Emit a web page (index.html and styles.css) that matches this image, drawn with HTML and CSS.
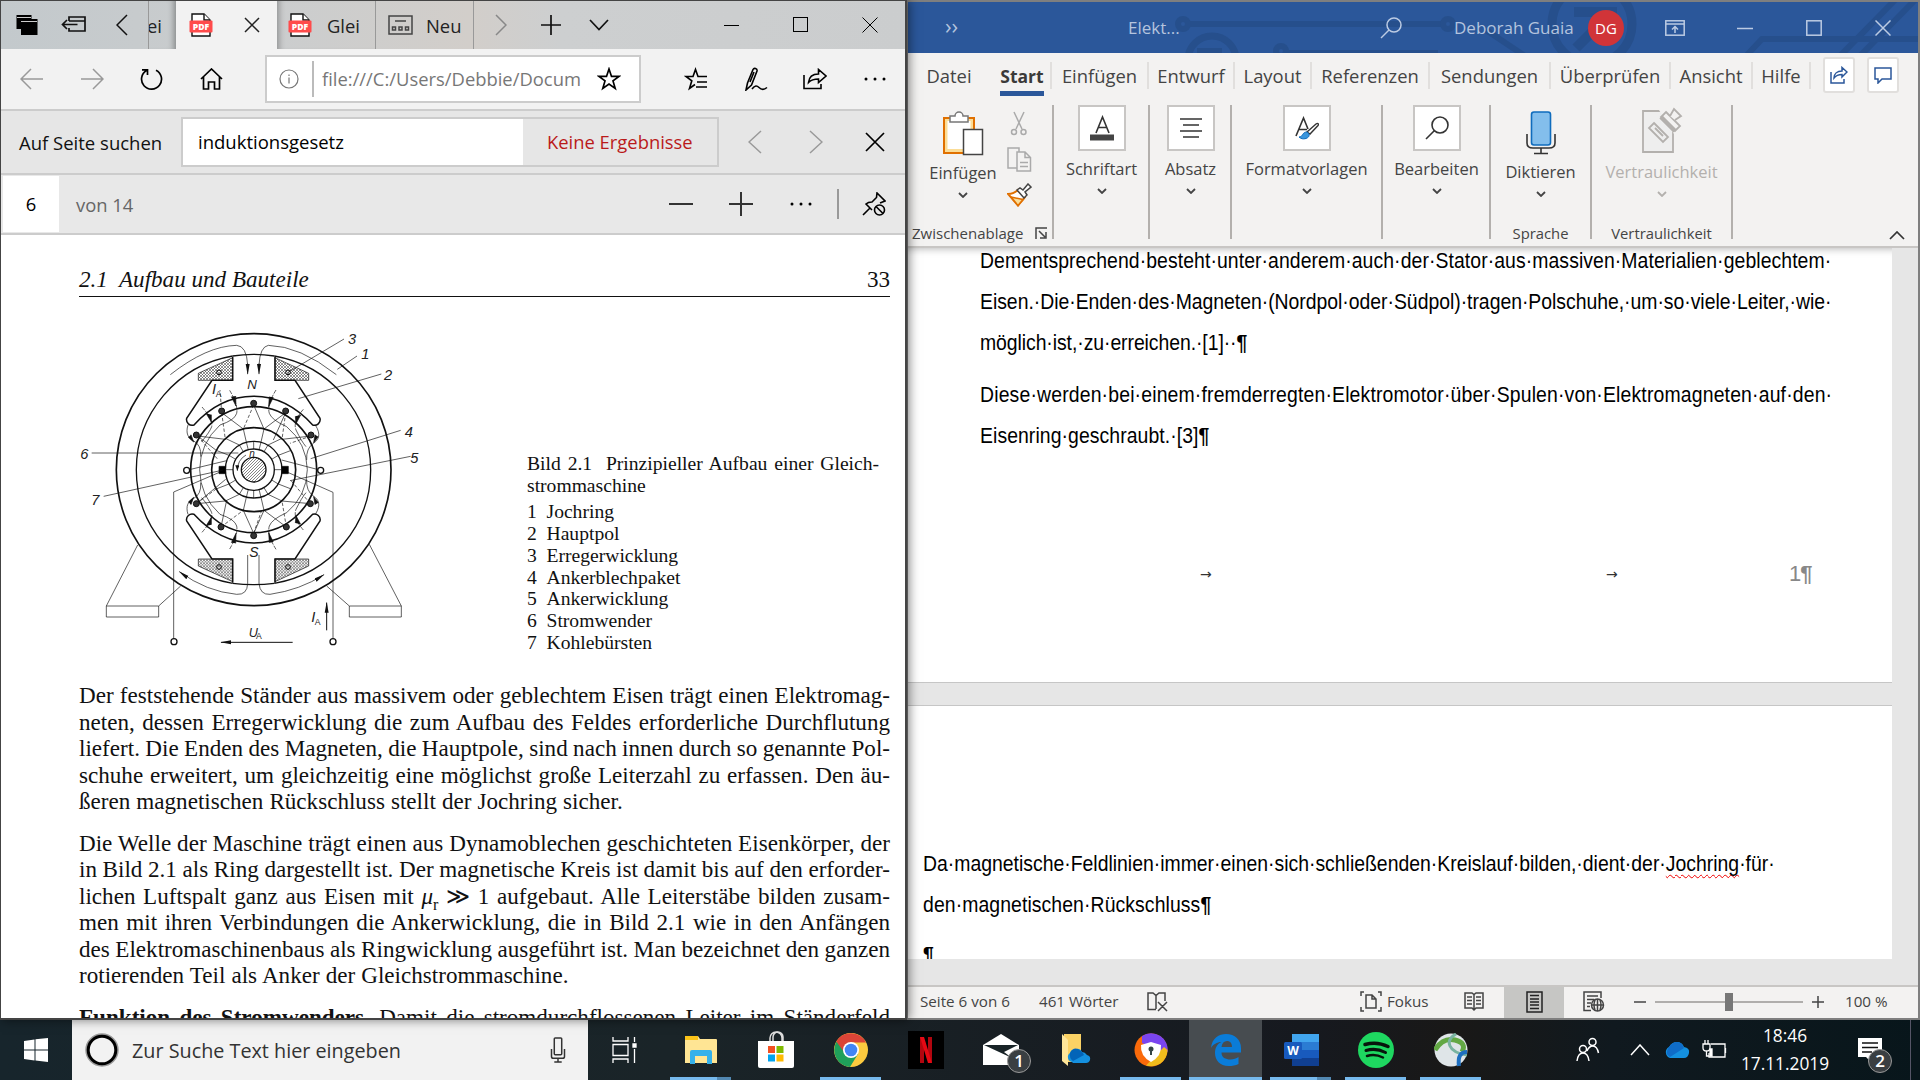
FILE: index.html
```html
<!DOCTYPE html>
<html lang="de">
<head>
<meta charset="utf-8">
<title>Desktop</title>
<link rel="stylesheet" href="styles.css">
</head>
<body>
<svg class="defs" width="0" height="0" aria-hidden="true">
  <defs>
    <symbol id="pdf" viewBox="0 0 24 25">
      <path d="M3 1h12l6 6v16H3z" fill="#fff" stroke="#111" stroke-width="1.4"/>
      <path d="M15 1v6h6" fill="#fff" stroke="#111" stroke-width="1.4"/>
      <rect x="0.5" y="7.5" width="23" height="12" rx="1" fill="#ff4b4b"/>
      <text x="12" y="16.8" text-anchor="middle" font-family="Open Sans" font-weight="800" font-size="8.6" fill="#fff">PDF</text>
    </symbol>
    <symbol id="down" viewBox="0 0 10 6"><path d="M1 1l4 4 4-4" fill="none" stroke="currentColor" stroke-width="1.8"/></symbol>
    <pattern id="hatch" width="9" height="9" patternUnits="userSpaceOnUse"><path d="M0 0l9 9M9 0L0 9" stroke="#333" stroke-width="1.6"/></pattern>
    <pattern id="lines" width="9" height="9" patternUnits="userSpaceOnUse"><path d="M0 9L9 0M-2 2L2 -2M7 11L11 7" stroke="#333" stroke-width="1.8"/></pattern>
    <marker id="arr" markerUnits="userSpaceOnUse" markerWidth="34" markerHeight="14" refX="30" refY="7" orient="auto"><path d="M0 1L32 7 0 13z" fill="#111"/></marker>
    <marker id="sarr" markerUnits="userSpaceOnUse" markerWidth="18" markerHeight="12" refX="16" refY="6" orient="auto"><path d="M0 0L17 6 0 12z" fill="#111"/></marker>
  </defs>
</svg>

<div class="windows">
  <section class="edge">
    <header class="tabs">
      <div class="tabs-left">
        <svg width="24" height="24" viewBox="0 0 24 24"><path d="M1.500 2h15v4h4v0h2v16H6V16H1.500z" fill="#000"/><path d="M2 4.500h14M6 8.500h16" stroke="#ccc" stroke-width="1"/></svg>
        <svg width="26" height="20" viewBox="0 0 26 20" fill="none" stroke="#111" stroke-width="1.700"><path d="M8 6V2h16v14H8v-3M8 6h16M1.500 9.500h15M6 5L1.500 9.500 6 14"/></svg>
        <svg width="12" height="22" viewBox="0 0 12 22" fill="none" stroke="#111" stroke-width="1.500"><path d="M11 1L1 11l10 10"/></svg>
      </div>
      <div class="tab tab-cut"><span>ei</span></div>
      <div class="tab tab-active"><svg width="24" height="25"><use href="#pdf"/></svg><svg width="16" height="16" viewBox="0 0 16 16" stroke="#222" stroke-width="1.500"><path d="M1 1l14 14M15 1L1 15"/></svg></div>
      <div class="tab tab-pdf"><svg width="24" height="25"><use href="#pdf"/></svg><span>Glei</span></div>
      <div class="tab tab-new"><svg width="25" height="20" viewBox="0 0 25 20" fill="none" stroke="#444" stroke-width="1.500"><rect x="1" y="1" width="23" height="18"/><path d="M7 6h11"/><rect x="4.500" y="12" width="3" height="3"/><rect x="11" y="12" width="3" height="3"/><rect x="17.500" y="12" width="3" height="3"/></svg><span>Neu</span></div>
      <div class="tabs-right">
        <svg width="12" height="22" viewBox="0 0 12 22" fill="none" stroke="#888" stroke-width="1.500"><path d="M1 1l10 10L1 21"/></svg>
        <svg width="20" height="20" viewBox="0 0 20 20" stroke="#111" stroke-width="1.700"><path d="M10 0v20M0 10h20"/></svg>
        <svg width="20" height="12" viewBox="0 0 20 12" fill="none" stroke="#111" stroke-width="1.700"><path d="M1 1l9 9.500L19 1"/></svg>
        <svg width="15" height="16" viewBox="0 0 15 16" stroke="#000" stroke-width="1"><path d="M0 8.500h15"/></svg>
        <svg width="16" height="16" viewBox="0 0 16 16" fill="none" stroke="#000"><rect x=".5" y=".5" width="14" height="14"/></svg>
        <svg width="16" height="16" viewBox="0 0 16 16" stroke="#000"><path d="M.5.500l15 15M15.500.500l-15 15"/></svg>
      </div>
    </header>

    <div class="nav">
      <svg width="24" height="22" viewBox="0 0 24 22" fill="none" stroke="#999" stroke-width="1.500"><path d="M23 11H1M11 1L1 11l10 10"/></svg>
      <svg width="24" height="22" viewBox="0 0 24 22" fill="none" stroke="#999" stroke-width="1.500"><path d="M1 11h22M13 1l10 10-10 10"/></svg>
      <svg width="23" height="22" viewBox="0 0 23 22" fill="none" stroke="#000" stroke-width="1.700"><path d="M6.500 2.500A10 10 0 1 0 16 2.200M2 1.800h5.500V7"/></svg>
      <svg width="23" height="22" viewBox="0 0 23 22" fill="none" stroke="#000" stroke-width="1.700"><path d="M1 11L11.500 1 22 11M3.500 9v12h5v-7h6v7h5V9"/></svg>
      <div class="address">
        <svg width="20" height="20" viewBox="0 0 20 20" fill="none" stroke="#777" stroke-width="1.200"><circle cx="10" cy="10" r="9"/><path d="M10 8.500v6M10 5.500v1.500"/></svg>
        <i class="bar"></i><span class="url">file:///C:/Users/Debbie/Documents</span>
        <svg width="24" height="24" viewBox="0 0 24 24" fill="none" stroke="#000" stroke-width="1.700"><path d="M12 2l2.500 7.400H22l-6 4.500 2.200 7.500L12 17l-6.200 4.400L8 13.900 2 9.400h7.500z"/></svg>
      </div>
      <svg width="24" height="24" viewBox="0 0 24 24" fill="none" stroke="#000" stroke-width="1.600"><path d="M23 9.500H14L11.500 2.500 9 9.500H2l5.800 4.300L5.500 21.500l5.500-4M13 15h10M12 20h11"/></svg>
      <svg width="24" height="24" viewBox="0 0 24 24" fill="none" stroke="#000" stroke-width="1.600"><path d="M2 23l1.500-7L9 2.500c1-2 4.500-1 4 1.500L7.500 18zM10 5l-4 10M8 22c3-4 5-3.500 7-1.500s5 2.500 8 0"/></svg>
      <svg width="24" height="22" viewBox="0 0 24 22" fill="none" stroke="#000" stroke-width="1.600"><path d="M1 7v13.500h17V16M5.500 14.500C6 9 9.500 6 15.500 6V1.500L23 8l-7.500 6.500V11c-4 0-7 .5-10 3.500z"/></svg>
      <svg width="24" height="6" viewBox="0 0 24 6"><circle cx="3" cy="3" r="1.500"/><circle cx="12" cy="3" r="1.500"/><circle cx="21" cy="3" r="1.500"/></svg>
    </div>

    <div class="find">
      <label>Auf Seite suchen</label>
      <div class="find-box"><div class="find-input">induktionsgesetz</div><div class="find-result">Keine Ergebnisse</div></div>
      <svg width="14" height="24" viewBox="0 0 14 24" fill="none" stroke="#999" stroke-width="1.500"><path d="M13 1L1 12l12 11"/></svg>
      <svg width="14" height="24" viewBox="0 0 14 24" fill="none" stroke="#999" stroke-width="1.500"><path d="M1 1l12 11L1 23"/></svg>
      <svg width="20" height="20" viewBox="0 0 20 20" stroke="#000" stroke-width="1.700"><path d="M1 1l18 18M19 1L1 19"/></svg>
    </div>

    <div class="pdfbar">
      <div class="pageno">6</div>
      <span class="of">von 14</span>
      <svg width="24" height="2"><path d="M0 1h24" stroke="#333" stroke-width="2"/></svg>
      <svg width="24" height="24" stroke="#333" stroke-width="2"><path d="M0 12h24M12 0v24"/></svg>
      <svg width="24" height="6" viewBox="0 0 24 6"><circle cx="3" cy="3" r="1.500"/><circle cx="12" cy="3" r="1.500"/><circle cx="21" cy="3" r="1.500"/></svg>
      <i class="bar"></i>
      <svg width="24" height="24" viewBox="0 0 24 24" fill="none" stroke="#000" stroke-width="1.600"><path d="M1 23l7-7M10 18L4 12c1.500-1.500 4-2 6-2l4.500-4.500L15 1l8 8-5 2"/><circle cx="17.500" cy="18" r="5"/><path d="M14 14.500l7 7"/></svg>
    </div>

    <article class="pdf">
      <div class="pdf-head"><em>2.1&nbsp; Aufbau und Bauteile</em><span>33</span></div>
      <div class="figure">
        <svg class="motor" width="380" height="350" viewBox="0 0 1140 1050" fill="none" stroke="#111" stroke-width="2">
          <ellipse cx="581" cy="479" rx="412" ry="408" stroke-width="5"/>
          <path d="M518 138A348 346 0 0 0 518 820M643 820A348 346 0 0 0 643 138" stroke-width="4"/>
          <path d="M518 138Q581 128 643 138M518 820Q581 828 643 820" stroke-width="4"/>
          <g id="pole" stroke-width="4.500">
            <path d="M518 140V211H456L380 325A17 17 0 0 0 402 345Q480 259 581 259Q680 259 758 345A17 17 0 0 0 780 325L705 211H645V140"/>
            <path d="M415 190L518 143V211H415zM645 143L746 190V211H645z" fill="url(#hatch)" stroke-width="2"/>
            <circle cx="477" cy="187" r="7" stroke-width="3"/><circle cx="684" cy="187" r="7" stroke-width="3"/>
            <g stroke-width="2">
              <path d="M426 291Q460 330 455 350M730 298Q698 335 708 360M509 241Q535 285 530 310M648 240Q620 285 628 310" stroke-dasharray="12 4"/>
              <path d="M384 345C376 370 385 385 400 392Q425 405 422 440M766 345C785 375 775 390 760 400Q738 415 740 450M455 350Q450 365 425 395M530 310Q525 330 480 345Q420 400 419 479M628 310Q635 330 680 350Q740 400 742 479M708 360Q725 395 738 410"/>
              <path d="M514 260l14 28-1-30M640 262l-14 28 2-30M438 310l16 26 0-22M722 315l-14 26-2-22M385 382l16 14-8-22M775 380l-14 18 4-24" fill="#111"/>
            </g>
          </g>
          <use href="#pole" transform="matrix(1 0 0 -1 0 958)"/>
          <circle cx="581" cy="479" r="189" stroke-width="5"/>
          <circle cx="581" cy="479" r="126" stroke-width="5"/>
          <circle cx="581" cy="479" r="85" stroke-width="4"/>
          <circle cx="581" cy="479" r="62" stroke-width="4"/>
          <circle cx="581" cy="479" r="37" fill="url(#lines)" stroke-width="4"/>
          <path d="M581 394v23M581 541v23M538 405l12 20M624 405l-12 20M538 553l12-20M624 553l-12-20M507 436l20 12M655 436l-20 12M507 522l20-12M655 522l-20-12M603 396l-6 24M559 396l6 24M603 562l-6-24M559 562l6-24M643 479h22M497 479h22"/>
          <path d="M559 396l-9-39M603 396l9-39M538 405l-42-20M624 405l42-20M507 436l-36-14M655 436l36-14M559 562l-9 39M603 562l9 39M538 553l-42 20M624 553l42 20M507 522l-36 14M655 522l36 14"/>
          <path d="M581 285L612 357M485 308L550 357M677 308L612 357M413 378L496 388M413 378L470 422M753 378L666 388M388 479L500 452M775 479L665 450M409 581L497 508M409 581L496 573M483 651L500 571M581 670L550 601M679 651L612 601M751 581L666 573M677 308L640 390M581 670L612 601"/>
          <path d="M581 285L550 357M485 308L496 388M677 308L666 388M413 378L475 450M753 378L690 400M483 651L550 601M581 670L605 601M679 651L666 573M751 581L690 508M409 581L470 536M485 308L480 240" stroke-dasharray="10 6"/>
          <path d="M497 479L341 546V985M665 479L819 547V985" />
          <g fill="#333" stroke-width="3"><circle cx="581" cy="280" r="9"/><circle cx="485" cy="303" r="9"/><circle cx="677" cy="303" r="9"/><circle cx="409" cy="375" r="9"/><circle cx="753" cy="375" r="9"/><circle cx="409" cy="581" r="9"/><circle cx="751" cy="581" r="9"/><circle cx="483" cy="651" r="9"/><circle cx="679" cy="651" r="9"/><circle cx="581" cy="677" r="9"/></g>
          <g fill="#fff" stroke-width="4"><circle cx="380" cy="481" r="9"/><circle cx="782" cy="481" r="9"/><circle cx="342" cy="995" r="9"/><circle cx="819" cy="995" r="9"/></g>
          <path d="M477 469h20v22h-20zM665 469h20v22h-20z" fill="#000"/>
          <path d="M331 194Q440 108 530 106Q560 108 563 165M829 194Q720 108 625 106Q600 110 597 165"/>
          <path d="M563 160V192" marker-end="url(#arr)"/>
          <path d="M597 160V192" marker-end="url(#arr)"/>
          <path d="M563 735V820Q562 855 530 853Q440 845 358 785" marker-end="url(#arr)"/>
          <path d="M597 735V820Q600 855 630 853Q720 840 792 794" marker-end="url(#arr)"/>
          <path d="M233 705L139 888M928 703L1024 888M362 828L296 888M800 828L868 888M139 888H296V921H139zM868 888H1024V921H868z"/>
          <path d="M852 87L684 187M891 138L832 178M964 192L715 266M1022 361L752 446M1052 439L690 512M95 429H535M131 559L490 480"/>
          <path d="M558 435Q532 450 532 482" marker-end="url(#sarr)"/>
          <path d="M698 997H483" stroke-width="3" marker-end="url(#arr)"/>
          <path d="M800 961V878" stroke-width="3" marker-end="url(#arr)"/>
          <g class="labels" fill="#222" stroke="none">
            <text x="864" y="101">3</text><text x="904" y="147">1</text><text x="972" y="210">2</text><text x="1034" y="380">4</text><text x="1051" y="458">5</text><text x="61" y="446">6</text><text x="94" y="584">7</text>
            <text x="562" y="236" font-size="40">N</text><text x="568" y="742" font-size="42">S</text><text x="456" y="252">I</text><text x="754" y="937">I</text><text x="566" y="980" font-size="38">U</text><text x="568" y="442" font-size="30">n</text>
            <g class="sub"><text x="467" y="260">A</text><text x="764" y="946">A</text><text x="588" y="986">A</text></g>
          </g>
        </svg>
        <div class="caption">
          <p class="cap1">Bild 2.1&nbsp; Prinzipieller Aufbau einer Gleich-</p><p>strommaschine</p>
          <ol><li><b>1</b>Jochring</li><li><b>2</b>Hauptpol</li><li><b>3</b>Erregerwicklung</li><li><b>4</b>Ankerblechpaket</li><li><b>5</b>Ankerwicklung</li><li><b>6</b>Stromwender</li><li><b>7</b>Kohlebürsten</li></ol>
        </div>
      </div>
      <div class="para">
        <p>Der feststehende Ständer aus massivem oder geblechtem Eisen trägt einen Elektromag-</p>
        <p>neten, dessen Erregerwicklung die zum Aufbau des Feldes erforderliche Durchflutung</p>
        <p>liefert. Die Enden des Magneten, die Hauptpole, sind nach innen durch so genannte Pol-</p>
        <p>schuhe erweitert, um gleichzeitig eine möglichst große Leiterzahl zu erfassen. Den äu-</p>
        <p class="last">ßeren magnetischen Rückschluss stellt der Jochring sicher.</p>
      </div>
      <div class="para">
        <p>Die Welle der Maschine trägt einen aus Dynamoblechen geschichteten Eisenkörper, der</p>
        <p>in Bild 2.1 als Ring dargestellt ist. Der magnetische Kreis ist damit bis auf den erforder-</p>
        <p>lichen Luftspalt ganz aus Eisen mit <em>μ</em><sub>r</sub> <span class="gg">≫</span> 1 aufgebaut. Alle Leiterstäbe bilden zusam-</p>
        <p>men mit ihren Verbindungen die Ankerwicklung, die in Bild 2.1 wie in den Anfängen</p>
        <p>des Elektromaschinenbaus als Ringwicklung ausgeführt ist. Man bezeichnet den ganzen</p>
        <p class="last">rotierenden Teil als Anker der Gleichstrommaschine.</p>
      </div>
      <div class="para">
        <p><strong>Funktion des Stromwenders.</strong> Damit die stromdurchflossenen Leiter im Ständerfeld</p>
      </div>
    </article>
  </section>

  <section class="word">
    <header class="title">
      <svg class="circuit" width="1010" height="51" viewBox="908 2 1010 51" fill="none" stroke="#264f8c" stroke-width="6">
        <circle cx="1183" cy="24" r="5"/><path d="M1188 24H1444"/><circle cx="1448" cy="24" r="5"/><circle cx="1212" cy="60" r="24" stroke-width="7"/><path d="M1197 51h25" /><circle cx="1281" cy="51" r="5"/><path d="M1288 53H1438M1486 30l42 28M1746 56l16-17h156M1840 56L1895 0M1860 56L1915 0"/><circle cx="1592" cy="24" r="40" stroke-width="9"/><path d="M1574 12h38v28M1612 12l-36 36" stroke-width="10"/>
      </svg>
      <span class="quick">››</span><span class="doc">Elekt...</span>
      <svg width="22" height="22" viewBox="0 0 22 22" fill="none" stroke="#bccbe3" stroke-width="1.500"><circle cx="14" cy="8" r="7"/><path d="M9 13l-8 8"/></svg>
      <span class="user">Deborah Guaia</span><span class="avatar">DG</span>
      <svg width="20" height="16" viewBox="0 0 20 16" fill="none" stroke="#bccbe3" stroke-width="1.500"><rect x=".8" y=".8" width="18.400" height="14.400"/><path d="M1 4h18M10 13V7M7 9.500L10 6.500l3 3"/></svg>
      <svg width="16" height="16" viewBox="0 0 16 16" stroke="#bccbe3" stroke-width="1.500"><path d="M0 8.500h16"/></svg>
      <svg width="16" height="16" viewBox="0 0 16 16" fill="none" stroke="#bccbe3" stroke-width="1.500"><rect x=".8" y=".8" width="14.400" height="14.400"/></svg>
      <svg width="16" height="16" viewBox="0 0 16 16" stroke="#bccbe3" stroke-width="1.500"><path d="M.5.500l15 15M15.500.500l-15 15"/></svg>
    </header>
    <nav class="menu">
      <span class="nosep">Datei</span><span class="on"><b>Start</b></span><span>Einfügen</span><span>Entwurf</span><span>Layout</span><span>Referenzen</span><span>Sendungen</span><span>Überprüfen</span><span>Ansicht</span><span>Hilfe</span>
      <div class="mbtn"><svg width="18" height="18" viewBox="0 0 18 18" fill="none" stroke="#2b579a" stroke-width="1.500"><path d="M1 6v11h13v-4M4 12c0-4 3-7 8-7V1.500L17 6l-5 5V8.500c-3 0-6 1-8 3.500z"/></svg></div>
      <div class="mbtn"><svg width="18" height="18" viewBox="0 0 18 18" fill="none" stroke="#2b579a" stroke-width="1.500"><path d="M1 2h16v11H8l-4 4v-4H1z"/></svg></div>
    </nav>
    <div class="ribbon">
      <div class="group clip">
        <div class="clip-main">
          <div class="paste">
            <svg width="42" height="46" viewBox="0 0 42 46"><path d="M2 7h30v35H2z" fill="#fbdd97" stroke="#e07000" stroke-width="2"/><path d="M5.500 10h23v28h-23z" fill="#fff"/><path d="M8 5h5a4 4 0 0 1 8 0h5v6H8z" fill="#fff" stroke="#777" stroke-width="1.500"/><path d="M21.500 18.500h19v25h-19z" fill="#fff" stroke="#444" stroke-width="1.500"/></svg>
            <span>Einfügen</span><svg class="dn" width="10" height="6"><use href="#down"/></svg>
          </div>
          <div class="clip-side">
            <svg width="18" height="25" viewBox="0 0 18 25" fill="none" stroke="#aaa" stroke-width="1.500"><path d="M4 1l8 17M14 1L6 18"/><circle cx="4" cy="21" r="2.500"/><circle cx="13.500" cy="21" r="2.500"/></svg>
            <svg width="25" height="25" viewBox="0 0 25 25" fill="#f3f2f1" stroke="#aaa" stroke-width="1.500"><path d="M1 1h11v20H1z"/><path d="M10 5h8l5.500 5.500V24H10zM18 5v5.500h5.500M13 15.500h8M13 19.500h8"/></svg>
            <svg width="25" height="24" viewBox="0 0 25 24" fill="#fff" stroke="#444" stroke-width="1.500"><path d="M1 11c4 0 7-1 10-4l7 7c-2 3-4 5-7 8.500z" stroke="#e07000" stroke-width="2"/><path d="M4 14l12 2.500-5 6z" fill="#fbdd97" stroke="#e07000"/><path d="M10 7l3-2 3 2 5-6 3 3-6 5 2 3-3 3z"/></svg>
          </div>
        </div>
        <footer><span>Zwischenablage</span><svg width="12" height="12" viewBox="0 0 12 12" fill="none" stroke="#444" stroke-width="1.500"><path d="M1 12V1h11M4 4l6 6M11 5v6H5"/></svg></footer>
      </div>
      <div class="group g2"><div class="box"><svg width="24" height="26" viewBox="0 0 24 26"><path d="M6 18L12.500 2 19 18M8 12.500h9" fill="none" stroke="#333" stroke-width="1.600"/><path d="M0 19.500h24v6H0z" fill="#444"/></svg></div><span>Schriftart</span><svg class="dn" width="10" height="6"><use href="#down"/></svg></div>
      <div class="group g3"><div class="box"><svg width="22" height="22" viewBox="0 0 22 22" stroke="#333" stroke-width="1.500"><path d="M0 2h22M3 8h16M0 14h22M3 20h16"/></svg></div><span>Absatz</span><svg class="dn" width="10" height="6"><use href="#down"/></svg></div>
      <div class="group g4"><div class="box"><svg width="24" height="24" viewBox="0 0 24 24" fill="none"><path d="M1 20L8.500 2 13 13M4 13.500h8" stroke="#333" stroke-width="1.600"/><path d="M12 16L21 8c2-1.500 3 0 2 1.500L15 18z" stroke="#333" stroke-width="1.400" fill="#fff"/><path d="M4 21c4 0 3-5 8-5 3 2 3 5-1 6.500-3 .8-5 .3-7-1.500z" fill="#3a96dd" stroke="#0f6cbd"/></svg></div><span>Formatvorlagen</span><svg class="dn" width="10" height="6"><use href="#down"/></svg></div>
      <div class="group g5"><div class="box"><svg width="24" height="24" viewBox="0 0 24 24" fill="none" stroke="#333" stroke-width="1.600"><circle cx="15" cy="9" r="8"/><path d="M9.500 14.500L1 23"/></svg></div><span>Bearbeiten</span><svg class="dn" width="10" height="6"><use href="#down"/></svg></div>
      <div class="group g6"><svg width="30" height="44" viewBox="0 0 30 44" fill="none"><rect x="5.500" y="1" width="19" height="33" rx="2.500" fill="#83beec" stroke="#0f6cbd" stroke-width="1.600"/><path d="M1 23v9q0 5 6 5h16q6 0 6-5v-9M15 37v5M8 42.500h14" stroke="#333" stroke-width="1.600"/></svg><span>Diktieren</span><svg class="dn" width="10" height="6"><use href="#down"/></svg><small>Sprache</small></div>
      <div class="group g7"><svg width="42" height="48" viewBox="0 0 42 48" fill="#eee" stroke="#b3b0ad" stroke-width="1.800"><path d="M2 4h30v41H2z"/><path d="M18 3l16-3 8 14-9 13z" fill="#f3f2f1" stroke="none"/><path d="M13 16l14 14-5 5L8 21zM14 21l8 8"/><path d="M25 5l14 14-5 5-14-14z" fill="#f3f2f1"/><path d="M29 9l4-7 7 7-6 4" fill="#f3f2f1"/><path d="M20 10l14 14" stroke-width="4.500"/></svg><span class="off">Vertraulichkeit</span><svg class="dn off" width="10" height="6"><use href="#down"/></svg><small>Vertraulichkeit</small></div>
      <svg class="collapse" width="16" height="9" viewBox="0 0 16 9" fill="none" stroke="#333" stroke-width="1.700"><path d="M1 8l7-7 7 7"/></svg>
    </div>
    <div class="canvas">
      <div class="sheet sheet1">
        <div class="narrow">
          <p class="l1">Dementsprechend·besteht·unter·anderem·auch·der·Stator·aus·massiven·Materialien·geblechtem·</p>
          <p class="l2">Eisen.·Die·Enden·des·Magneten·(Nordpol·oder·Südpol)·tragen·Polschuhe,·um·so·viele·Leiter,·wie·</p>
          <p class="l3">möglich·ist,·zu·erreichen.·[1]··<b>¶</b></p>
          <p class="l4">Diese·werden·bei·einem·fremderregten·Elektromotor·über·Spulen·von·Elektromagneten·auf·den·</p>
          <p class="l5">Eisenring·geschraubt.·[3]<b>¶</b></p>
        </div>
        <div class="foot"><span>→</span><span>→</span><span class="pn">1<b>¶</b></span></div>
      </div>
      <div class="sheet sheet2">
        <div class="narrow">
          <p class="l6">Da·magnetische·Feldlinien·immer·einen·sich·schließenden·Kreislauf·bilden,·dient·der·<u>Jochring</u>·für·</p>
          <p class="l7">den·magnetischen·Rückschluss<b>¶</b></p>
          <p class="l8"><b>¶</b></p>
        </div>
      </div>
    </div>
    <footer class="status">
      <span>Seite 6 von 6</span><span>461 Wörter</span>
      <svg width="22" height="20" viewBox="0 0 22 20" fill="none" stroke="#444" stroke-width="1.500"><path d="M9 17.500H1V1h5l3 2.500L12 1h6v8M9 3.500V17M11 10l9 9M20 10l-9 9"/></svg>
      <svg width="22" height="21" viewBox="0 0 22 21" fill="none" stroke="#444" stroke-width="1.500"><path d="M4 1H1v4M18 1h3v4M4 20H1v-4M18 20h3v-4M6 4h6l4 4v9H6zM12 4v4h4"/></svg>
      <span>Fokus</span>
      <svg width="20" height="20" viewBox="0 0 20 20" fill="none" stroke="#444" stroke-width="1.500"><path d="M1 1h7l2 1.500L12 1h7v15h-7l-2 2-2-2H1zM10 2v16M3 5h5M3 8.500h5M3 12h5M12 5h5M12 8.500h5M12 12h5"/></svg>
      <div class="view"><svg width="17" height="22" viewBox="0 0 17 22" fill="none" stroke="#222" stroke-width="1.500"><path d="M1 1h15v20H1zM4 4.500h9M4 8h9M4 11h9M4 14h9M4 17.500h9"/></svg></div>
      <svg width="22" height="21" viewBox="0 0 22 21" fill="none" stroke="#444" stroke-width="1.500"><path d="M8 19.500H1V1h17v6M4 5h11M4 8.500h7M4 12h4M4 15.500h3"/><circle cx="14.500" cy="14" r="6"/><path d="M8.500 14h12M14.500 8v12M12 9q-2 5 0 10M17 9q2 5 0 10"/></svg>
      <svg width="12" height="12" stroke="#444" stroke-width="1.500"><path d="M0 6h12"/></svg>
      <div class="slider"><i></i></div>
      <svg width="12" height="12" stroke="#444" stroke-width="1.500"><path d="M0 6h12M6 0v12"/></svg>
      <span class="zoomv">100 %</span>
    </footer>
  </section>
</div>

<footer class="taskbar">
  <div class="start"><svg width="24" height="24" viewBox="0 0 24 24" fill="#fff"><path d="M0 3l10.500-1.500v10H0zM11.500 1.300L24 0v11.500H11.500zM0 12.500h10.500v10L0 21zM11.500 12.500H24V24l-12.500-1.500z"/></svg></div>
  <div class="search">
    <svg width="34" height="36" viewBox="0 0 34 36"><circle cx="17" cy="18" r="15.500" fill="none" stroke="#999" stroke-width="2.500"/><circle cx="17" cy="18" r="13.800" fill="none" stroke="#000" stroke-width="3"/></svg>
    <span>Zur Suche Text hier eingeben</span>
    <svg width="18" height="26" viewBox="0 0 18 28" fill="none" stroke="#333" stroke-width="1.600"><rect x="5" y="1" width="8" height="18" rx="1"/><path d="M2 13v8q0 2 2 2h10q2 0 2-2v-8M9 23v4M5 27h8"/></svg>
  </div>
  <div class="app a1"><svg width="26" height="26" viewBox="0 0 26 26" fill="none" stroke="#fff" stroke-width="1.300"><path d="M1 0v4h15V0M1 7.500h15v11H1zM1 26v-4h15v4M22.500 0v5M22.500 12v14"/><path d="M21 7h3v3h-3z" fill="#fff"/></svg></div>
  <div class="app split"><svg width="34" height="30" viewBox="0 0 34 30"><path d="M1 2q0-1 1-1h12l2 3h16q1 0 1 1v23H1z" fill="#ffe594"/><path d="M1 1h13v4H1z" fill="#fcc419"/><path d="M6 29V17q0-2 2-2h18q2 0 2 2v12h-5v-8H11v8z" fill="#35b1ea"/></svg></div>
  <div class="app"><svg width="36" height="38" viewBox="0 0 36 38"><path d="M12 11V7a6 6 0 0 1 12 0v4M15 11V6a5 5 0 0 1 10 0v5" fill="none" stroke="#ddd" stroke-width="1.500"/><path d="M0 10h36v25q0 2-2 2H2q-2 0-2-2z" fill="#fff"/><path d="M10 15h7v7h-7z" fill="#f25022"/><path d="M18.500 15h7v7h-7z" fill="#7fba00"/><path d="M10 23.500h7v7h-7z" fill="#00a4ef"/><path d="M18.500 23.500h7v7h-7z" fill="#ffb900"/></svg></div>
  <div class="app run"><svg width="34" height="36" viewBox="0 0 34 36"><circle cx="17" cy="18" r="17" fill="#fcca3f"/><path d="M17 18L2.500 9.500A17 17 0 0 0 16 35l8-13z" fill="#1fa05a"/><path d="M2.300 9.500A17 17 0 0 1 32 10.500H17L10 20z" fill="#db4437"/><circle cx="17" cy="18" r="8" fill="#fff"/><circle cx="17" cy="18" r="6.300" fill="#4285f4"/></svg></div>
  <div class="app"><svg width="36" height="38" viewBox="0 0 36 38"><path d="M0 0h36v38H0z" fill="#000"/><path d="M12 6h4v26h-4zM20 6h4v26h-4z" fill="#b1060f"/><path d="M12 6h4l8 26h-4z" fill="#e50914"/></svg></div>
  <div class="app mail"><svg width="38" height="34" viewBox="0 0 38 34"><path d="M1 12L19 1l18 11v20H1z" fill="#fff"/><path d="M2 12h34L22 19l8 6z" fill="#182327"/></svg><b>1</b></div>
  <div class="app"><svg width="30" height="34" viewBox="0 0 30 34"><path d="M3 1h17v28H3z" fill="#fbd265"/><path d="M1 1l6 6v26l-6-5z" fill="#ffe69a"/><path d="M11 29a5 5 0 0 1-2-9q1-4 6-4 4-1 6 3 3 0 5 3 4 1 3 5-1 3-4 3H12z" fill="#1490df"/><path d="M9 20q3-6 8-4 4 2 6 6L12 28q-4-3-3-8z" fill="#0364b8"/></svg></div>
  <div class="app run"><svg width="34" height="34" viewBox="0 0 34 34"><circle cx="17" cy="17" r="16.500" fill="#fa6a0a"/><path d="M8 3a16.500 16.500 0 0 1 25.500 16L17 14 8 10z" fill="#7a45f0"/><path d="M33.500 17A16.500 16.500 0 0 1 12 32.500L30 14z" fill="#f0bc1c"/><path d="M17 9l10 3q1 11-10 17Q6 23 7 12z" fill="#fff"/><circle cx="17" cy="16" r="2.500" fill="#344"/><path d="M16 17h2v5h-2z" fill="#344"/></svg></div>
  <div class="app run active"><svg width="32" height="34" viewBox="0 0 32 34"><path d="M1 15C2 5 9 1 16 1c9 0 15 6 15 14v4.500H11.500c0 5 4 7 9 7 3 0 6-1 8-2.500v7c-3 1.500-6 2-10 2C10 33 5 27 5 20c0-5 2-9 6.500-11C7 9 3 11.500 1 15zm10.500-1H22c0-4-2-6-5-6s-5 2-5.500 6z" fill="#0a7cd8"/></svg></div>
  <div class="app split"><svg width="36" height="34" viewBox="0 0 36 34"><path d="M9 1h27v8H9z" fill="#41a5ee"/><path d="M9 9h27v8H9z" fill="#2b7cd3"/><path d="M9 17h27v8H9z" fill="#185abd"/><path d="M9 25h27v8H9z" fill="#103f91"/><rect x="1" y="9" width="18" height="17" rx="1.500" fill="#185abd"/><text x="10" y="22" text-anchor="middle" font-family="Open Sans" font-weight="700" font-size="12" fill="#fff">W</text></svg></div>
  <div class="app run"><svg width="36" height="36" viewBox="0 0 36 36" fill="none" stroke="#07150b" stroke-linecap="round"><circle cx="18" cy="18" r="18" fill="#1ed760" stroke="none"/><path d="M7 12.500q12-3.500 23 2" stroke-width="3.500"/><path d="M8 18.500q10-3 19.500 2" stroke-width="3"/><path d="M9 24q8-2.500 16 1.500" stroke-width="2.500"/></svg></div>
  <div class="app run"><svg width="34" height="34" viewBox="0 0 34 34" fill="none"><circle cx="17" cy="17" r="16.500" fill="#dfe5e8"/><path d="M1 17Q9 4 21 7t7 12" stroke="#63a844" stroke-width="5"/><path d="M22 1Q13 6 16 13t17 9" stroke="#79b3a0" stroke-width="3"/><path d="M33 19q-10 0-8 14" stroke="#1e6fc0" stroke-width="4"/></svg></div>
  <div class="tray">
    <svg width="24" height="26" viewBox="0 0 24 26" fill="none" stroke="#fff" stroke-width="1.500"><circle cx="16.500" cy="5" r="3.500"/><circle cx="7" cy="12" r="3.500"/><path d="M1 24q1-8 6-8t6 8M11 14q2-5 6-5t5.500 7"/></svg>
    <svg width="20" height="12" viewBox="0 0 20 12" fill="none" stroke="#fff" stroke-width="1.500"><path d="M1 11l9-10 9 10"/></svg>
    <svg width="26" height="18" viewBox="0 0 26 18"><path d="M6 17a6 6 0 0 1-1-11q3-5 8-5t7 5q6 1 5 6-1 5-5 5z" fill="#1490df"/><path d="M5 6q3-5 8-5t7 6L6 16q-6-3-1-10z" fill="#0f6cc8"/></svg>
    <svg width="26" height="20" viewBox="0 0 26 20" fill="none" stroke="#fff" stroke-width="1.300"><path d="M10 4h14v13H8v-4M24.500 8v5M2 4h7v4q0 3-3.500 3T2 8zM4 4V0M7 4V0M5.500 11v5H8"/><path d="M9 9h2v7H9z" fill="#fff"/></svg>
    <div class="clock"><span>18:46</span><span>17.11.2019</span></div>
    <div class="note"><svg width="26" height="28" viewBox="0 0 26 28"><path d="M1 1h24v19H16v7l-7-7H1z" fill="#fff"/><path d="M5 6h16M5 10.500h16M5 15h10" stroke="#111" stroke-width="1.500"/></svg><b>2</b></div>
  </div>
</footer>
</body>
</html>
```
FILE: styles.css
```css
* { box-sizing: border-box; }
body { margin: 0; width: 1920px; height: 1080px; overflow: hidden; font: 18.4px "Open Sans", "Noto Sans", sans-serif; color: #111; background: #7f7f7f; }
p, ol { margin: 0; padding: 0; list-style: none; }
svg { display: block; flex: none; }
.defs { position: absolute; }
.windows { display: flex; height: 1020px; }

/* Browser window */
.edge { position: relative; z-index: 1; width: 907px; height: 1020px; display: flex; flex-direction: column; border: solid #444; border-width: 1px 2px 2px 1px; background: #fff; box-shadow: 2px 0 10px rgba(0,0,0,.5); overflow: hidden; }
.tabs { display: flex; height: 48px; flex: none; background: linear-gradient(90deg, #c3c9cc, #cbcdce 30%, #d2ceca 52%, #cdcfd0 62%, #cbcdce); }
.tabs-left { width: 147px; display: grid; grid-template-columns: 46px 55px 12px; padding-left: 14px; align-items: center; }
.tab { display: flex; align-items: center; border-left: 1px solid #999; color: #222; }
.tab-cut { width: 28px; overflow: hidden; box-shadow: inset -7px 0 6px -5px rgba(0,0,0,.35); }
.tab-cut span { margin-left: -2px; }
.tab-active { width: 101px; background: #f2f2f2; padding-left: 13px; gap: 31px; border: 0; }
.tab-pdf { width: 98px; padding-left: 11px; gap: 15px; border: 0; box-shadow: inset 7px 0 6px -5px rgba(0,0,0,.3); }
.tab-new { width: 99px; padding-left: 12px; gap: 13px; border-right: 1px solid #999; }
.tabs-right { display: grid; grid-template-columns: 46px 48px 135px 69px 69px 16px; padding-left: 21px; align-items: center; }

.nav { display: grid; height: 62px; flex: none; grid-template-columns: 60px 60px 60px 65px 419px 60px 59px 60px 24px; padding-left: 19px; align-items: center; background: #f2f2f2; border-bottom: 2px solid #ccc; }
.address { width: 376px; height: 48px; display: flex; align-items: center; background: #fff; border: 2px solid #ccc; padding-left: 12px; margin-top: -1px; }
.bar { width: 2px; height: 36px; background: #bbb; margin-left: 13px; }
.url { width: 259px; margin: 0 16px 0 8px; overflow: hidden; white-space: nowrap; color: #777; }
.find { height: 64px; flex: none; display: grid; grid-template-columns: 162px 567px 61px 56px 20px; padding-left: 18px; align-items: center; background: #e6e6e6; border-bottom: 2px solid #ccc; font-size: 18.5px; }
.find-box { display: flex; width: 538px; height: 50px; border: 2px solid #ccc; line-height: 45px; }
.find-input { width: 340px; background: #fff; padding-left: 15px; color: #000; }
.find-result { padding-left: 24px; color: #ba1a1a; font-size: 18.4px; }
.pdfbar { height: 60px; flex: none; display: grid; grid-template-columns: 73px 593px 60px 60px 48px 25px 24px; align-items: center; background: #e8e8e8; border-bottom: 2px solid #ccc; padding-left: 2px; }
.pageno { width: 56px; height: 56px; background: #fff; line-height: 56px; text-align: center; color: #000; }
.of { color: #666; }
.pdfbar .bar { height: 30px; background: #999; margin: 0; }

.pdf { padding: 34px 0 0 78px; width: 889px; font: 23.1px/26.5px "Liberation Serif", serif; color: #111; }
.pdf-head { display: flex; justify-content: space-between; border-bottom: 1px solid #111; height: 28px; line-height: 20px; padding-bottom: 7px; }
.figure { display: flex; margin: 13px 0 0 -19px; height: 372px; }
.caption { padding: 143px 0 0 87px; font-size: 19.6px; line-height: 21.7px; white-space: nowrap; }
.caption .cap1 { word-spacing: 2px; }
.caption ol { margin-top: 5px; }
.caption li b { font-weight: normal; display: inline-block; width: 19.5px; }
.labels { font: italic 44px "Liberation Sans", sans-serif; }
.sub { font: 26px "Liberation Sans", sans-serif; }
.para { margin-bottom: 15px; }
.para p { height: 26.5px; white-space: nowrap; text-align-last: justify; word-spacing: -2px; }
.para .last { text-align-last: left; word-spacing: .3px; }
.para sub { font-size: 16px; line-height: 0; }

/* Word processor window */
.word { width: 1013px; height: 1020px; display: flex; flex-direction: column; border: solid #7f7f7f; border-width: 2px 2px 2px 1px; background: #f3f2f1; color: #444; overflow: hidden; }
.title { position: relative; height: 51px; flex: none; display: grid; grid-template-columns: 183px 252px 74px 134px 77px 72px 69px 69px 16px; padding-left: 37px; align-items: center; background: #2b579a; color: #b4c4de; font-size: 17px; }
.circuit { position: absolute; left: 0; top: 0; }
.title > :not(.circuit) { position: relative; }
.quick { font-size: 22px; margin-top: -5px; }
.avatar { width: 36px; height: 36px; border-radius: 50%; background: #d13438; color: #fff; font-size: 15px; line-height: 36px; text-align: center; }
.menu { display: grid; height: 52px; flex: none; grid-template-columns: 78px 58px 97px 86px 77px 118px 121px 120px 82px 58px 44px 44px; padding: 9px 0 0 8px; font-size: 18.4px; }
.menu span { height: 27px; line-height: 27px; text-align: center; border-right: 2px solid #e1dfdd; white-space: nowrap; }
.menu .nosep { border: 0; padding-right: 12px; }
.menu .on b { display: inline-block; height: 33px; border-bottom: 5px solid #2b579a; color: #3b3a39; font-size: 17.5px; }
.mbtn { width: 32px; height: 36px; margin-top: -5px; display: grid; place-items: center; background: #fff; border: 2px solid #e1dfdd; border-radius: 3px; justify-self: end; }
.ribbon { display: flex; height: 143px; flex: none; border-bottom: 2px solid #c8c6c4; font-size: 16.5px; }
.group { height: 134px; display: flex; flex-direction: column; align-items: center; border-right: 2px solid #b3b0ad; }
.group > span { height: 24px; line-height: 24px; margin: 6px 0 7px; white-space: nowrap; }
.box { width: 48px; height: 46px; background: #fff; border: 2px solid #c8c6c4; display: grid; place-items: center; }
.group small { font-size: 14.8px; margin-top: auto; line-height: 12px; }
.clip { width: 146px; align-items: stretch; }
.clip-main { display: flex; padding: 6px 0 0 9px; }
.paste { display: flex; flex-direction: column; align-items: center; width: 92px; }
.paste span { height: 24px; line-height: 24px; margin: 4px 0 7px; }
.clip-side { width: 26px; margin-left: -3px; display: flex; flex-direction: column; align-items: center; gap: 11px; }
.clip footer { margin-top: auto; display: flex; justify-content: space-between; align-items: center; font-size: 15px; line-height: 12px; padding: 0 5px 0 4px; }
.g2 { width: 96px; padding-left: 1px; } .g3 { width: 82px; padding-left: 1px; } .g4 { width: 151px; } .g5 { width: 108px; padding-left: 1px; } .g6 { width: 101px; padding-top: 6px; } .g7 { width: 141px; padding-top: 2px; }
.g6 > span { margin-top: 5px; } .g7 > span { margin-top: 5px; }
.off { color: #b3b0ad; }
.collapse { margin: 126px 0 0 156px; }

.canvas { flex: 1; background: #e6e6e6; overflow: hidden; }
.sheet { width: 984px; background: #fff; overflow: hidden; }
.sheet1 { height: 435px; box-shadow: inset 0 8px 8px -8px rgba(0,0,0,.35); border-bottom: 1px solid #c6c6c6; padding-left: 72px; }
.sheet2 { height: 254px; margin-top: 22px; border-top: 1px solid #c6c6c6; padding: 137px 0 0 15px; }
.narrow { font: 22.3px/41px "Liberation Sans", sans-serif; color: #000; transform: scaleX(.87); transform-origin: 0 0; white-space: nowrap; }
.narrow p { height: 41px; }
.sheet1 .narrow { margin-top: -8px; }
.l1 { letter-spacing: .09px; }
.l2 { letter-spacing: -.03px; }
.l3 { letter-spacing: -.08px; }
.l4 { margin-top: 11px; letter-spacing: .185px; }
.l5 { letter-spacing: .08px; }
.l7 { letter-spacing: .1px; }
.l8 { margin-top: 9px; }
.narrow u { text-decoration: underline wavy #e00 1px; text-underline-offset: 3px; text-decoration-skip-ink: none; }
.foot { display: grid; grid-template-columns: 406px 183px 40px; padding-left: 220px; margin-top: 93px; height: 50px; align-items: center; font: 14px "DejaVu Sans", sans-serif; color: #333; }
.foot .pn { font: 22px "Liberation Sans", sans-serif; color: #888; letter-spacing: -1px; }
.status { height: 33px; flex: none; border-top: 2px solid #c8c6c4; display: grid; grid-template-columns: 119px 108px 213px 27px 77px 40px 79px 51px 21px 157px 33px 50px; padding-left: 12px; align-items: center; font-size: 15.2px; color: #444; white-space: nowrap; }
.status > span { margin-top: -4px; }
.status > svg, .status > .slider { margin-top: -2px; }
.view { width: 60px; height: 31px; background: #c6c6c4; display: grid; place-items: center; padding-bottom: 2px; }
.slider { width: 148px; height: 2px; background: #b0aeac; }
.slider i { display: block; width: 8px; height: 18px; background: #777; position: relative; left: 70px; top: -8px; }

/* Taskbar */
.taskbar { height: 60px; display: flex; background: linear-gradient(90deg, #17252c, #1a2428 35%, #16191f 68%, #191817 76%, #10191f 84%, #08161b); color: #fff; }
.start { width: 72px; display: grid; place-items: center; }
.search { width: 516px; background: #f2f2f2; display: flex; align-items: center; padding-left: 13px; color: #333; }
.search span { width: 412px; margin-left: 13px; font-size: 19.8px; }
.search svg:last-child { margin-left: 5px; }
.app { width: 75px; position: relative; display: grid; place-items: center; }
.app.a1 { width: 75px; padding-right: 2px; }
.app::after { content: ""; position: absolute; left: 7px; right: 7px; bottom: 0; height: 3px; }
.run::after { background: #76b9ed; }
.split::after { background: linear-gradient(90deg, #76b9ed 77%, #5288b2 77%); }
.active { background: linear-gradient(90deg, transparent 1px, #474c50 1px 74px, transparent 74px); }
.active::after { left: 1px; right: 1px; }
.app b, .note b { position: absolute; left: 44px; top: 29px; width: 24px; height: 24px; border: 1px solid #999; border-radius: 50%; background: #3a3f42; font: 600 17px/22px "Open Sans", sans-serif; text-align: center; color: #fff; }
.tray { margin-left: auto; display: grid; grid-template-columns: 54px 34px 37px 39px 117px 54px; align-items: center; width: 344px; }
.clock { display: flex; flex-direction: column; align-items: center; font-size: 17.3px; line-height: 28px; width: 90px; }
.note { position: relative; border-right: 1px solid #556; height: 60px; padding-top: 17px; }
.note b { left: 11px; top: 29px; }
```
